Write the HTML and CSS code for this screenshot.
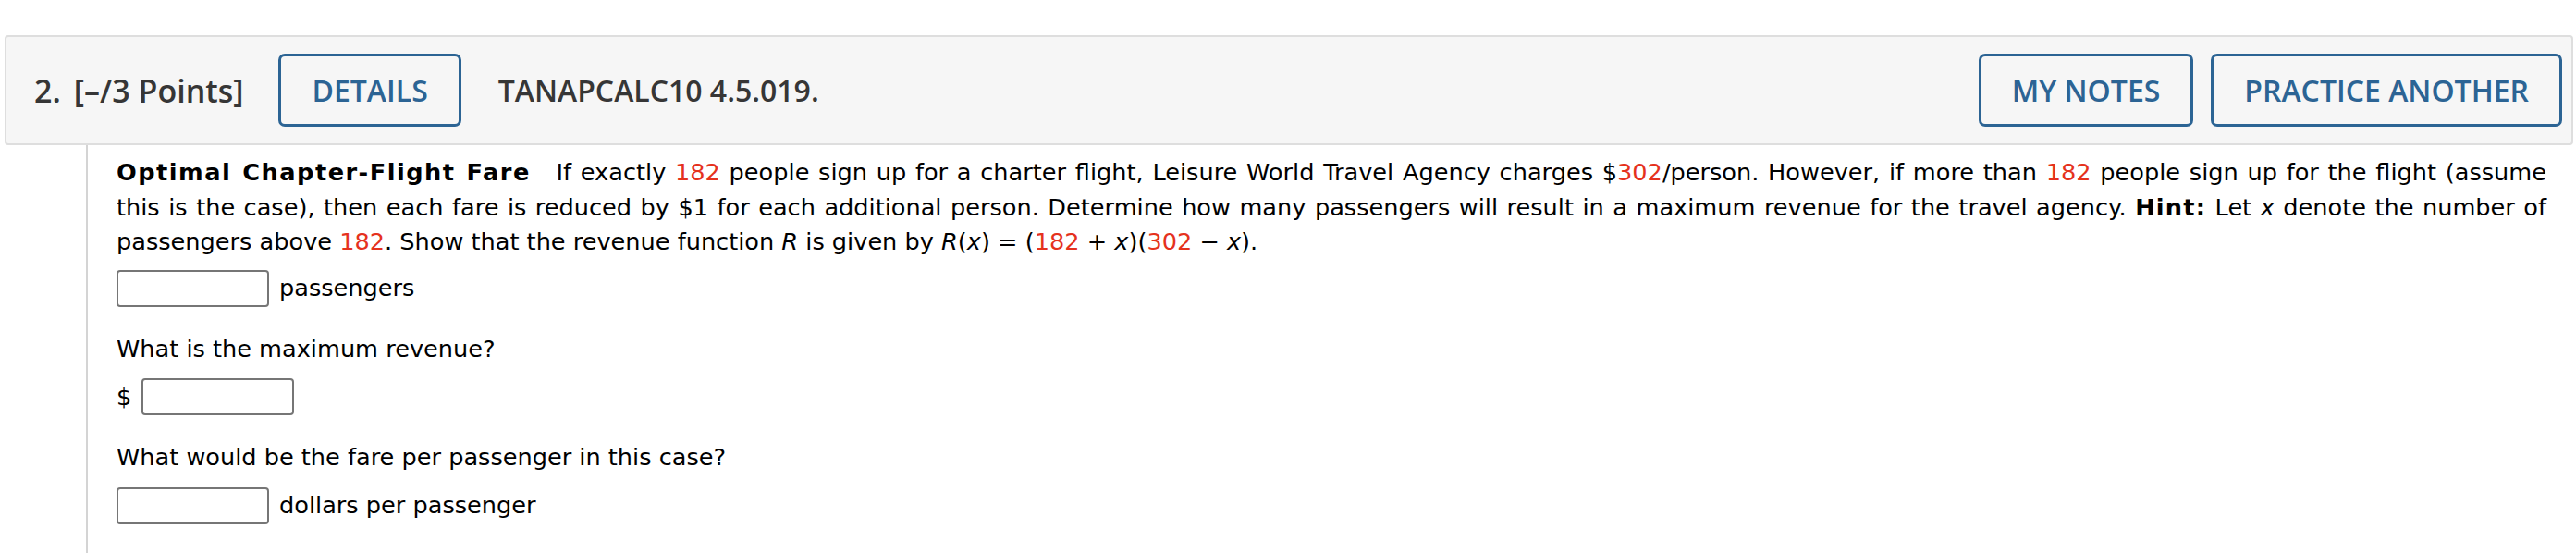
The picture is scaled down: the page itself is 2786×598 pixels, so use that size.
FILE: index.html
```html
<!DOCTYPE html>
<html lang="en">
<head>
<meta charset="utf-8">
<title>Question 2</title>
<link rel="stylesheet" href="styles.css">
</head>
<body>
<div class="page">
  <div class="qhead">
    <span class="qnum">2.</span>
    <span class="pts">[–/3 Points]</span>
    <button class="btn btn-details">DETAILS</button>
    <span class="code">TANAPCALC10 4.5.019.</span>
    <div class="spacer"></div>
    <div class="actions">
      <button class="btn">MY NOTES</button>
      <button class="btn">PRACTICE ANOTHER</button>
    </div>
  </div>
  <div class="qbody">
    <p class="stem"><b class="title">Optimal Chapter-Flight Fare</b> If exactly <span class="red">182</span> people sign up for a charter flight, Leisure World Travel Agency charges $<span class="red">302</span>/person. However, if more than <span class="red">182</span> people sign up for the flight (assume this is the case), then each fare is reduced by $1 for each additional person. Determine how many passengers will result in a maximum revenue for the travel agency. <b class="hint">Hint:</b> Let <i>x</i> denote the number of passengers above <span class="red">182</span>. Show that the revenue function <i>R</i> is given by <i>R</i>(<i>x</i>) = (<span class="red">182</span> + <i>x</i>)(<span class="red">302</span> − <i>x</i>).</p>
    <div class="answer first">
      <input class="box" type="text" aria-label="passengers">
      <span>passengers</span>
    </div>
    <p class="q">What is the maximum revenue?</p>
    <div class="answer">
      <span>$</span>
      <input class="box" type="text" aria-label="maximum revenue">
    </div>
    <p class="q">What would be the fare per passenger in this case?</p>
    <div class="answer">
      <input class="box" type="text" aria-label="fare">
      <span>dollars per passenger</span>
    </div>
  </div>
</div>
</body>
</html>
```

FILE: styles.css
```css
html, body {
  margin: 0;
  padding: 0;
  background: #ffffff;
}

.page {
  padding: 38px 3px 0 5px;
}

.qhead {
  display: flex;
  align-items: center;
  height: 115px;
  border: 2px solid #dedede;
  border-radius: 4px;
  background: #f6f6f6;
  padding: 0 10px 0 30px;
  font-family: "Open Sans", "Liberation Sans", sans-serif;
  font-weight: 600;
  color: #363636;
}

.qnum {
  font-size: 34px;
  margin-right: 14px;
}

.pts {
  font-size: 34px;
  margin-right: 38px;
}

.code {
  font-size: 32px;
  margin-left: 40px;
}

.spacer {
  flex: 1;
}

.actions {
  display: flex;
  gap: 19px;
}

.btn {
  height: 79px;
  box-sizing: border-box;
  padding: 0 33px;
  border: 3px solid #2c6494;
  border-radius: 7px;
  background: transparent;
  color: #2c6494;
  font-family: "Open Sans", "Liberation Sans", sans-serif;
  font-weight: 600;
  font-size: 32px;
  line-height: 1;
}

.qbody {
  margin-left: 88px;
  border-left: 2px solid #d4d4d4;
  padding: 11px 29px 60px 31px;
  font-family: Verdana, "DejaVu Sans", sans-serif;
  font-size: 25.6px;
  line-height: 37.6px;
  color: #000000;
}

.qbody p {
  margin: 0;
}

.stem {
  text-align: justify;
}

.title {
  letter-spacing: 1.5px;
  margin-right: 18px;
}

.hint {
  letter-spacing: 1.2px;
}

.red {
  color: #e5321d;
}

.answer {
  display: flex;
  align-items: center;
  gap: 11px;
  margin-top: 13px;
}

.answer.first {
  margin-top: 11px;
}

.q {
  margin-top: 27px !important;
}

.box {
  box-sizing: border-box;
  width: 165px;
  height: 40px;
  margin: 0;
  border: 2px solid #767676;
  border-radius: 4px;
  background: #ffffff;
}
```
